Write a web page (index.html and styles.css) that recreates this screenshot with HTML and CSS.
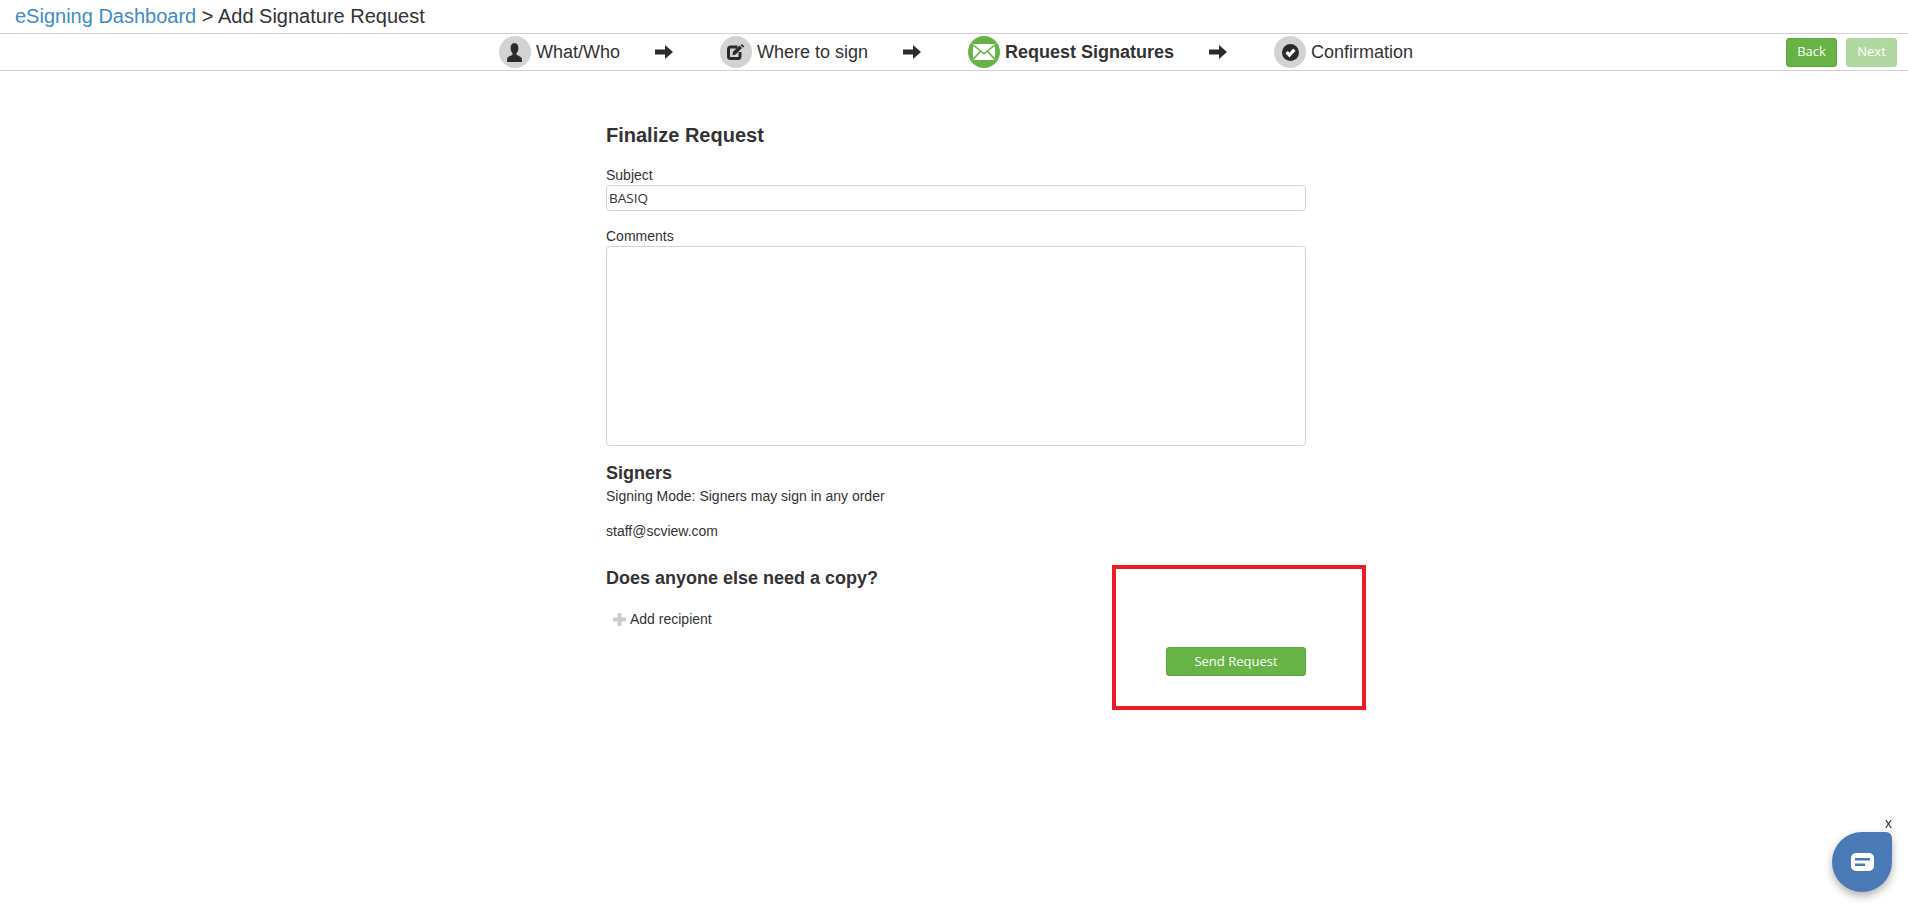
FILE: index.html
```html
<!DOCTYPE html>
<html lang="en">
<head>
<meta charset="utf-8">
<title>Add Signature Request</title>
<link rel="stylesheet" href="styles.css">
</head>
<body>
<header class="topbar">
  <a class="crumb-link" href="#">eSigning Dashboard</a> &gt; Add Signature Request
</header>
<nav class="stepbar">
  <ol class="steps">
    <li class="step">
      <span class="disc"><svg class="ico ico-user" viewBox="0 0 15 19"><path fill="#2b2b2b" d="M7.500 0C5 0 3.600 2 3.600 5c0 2.200.7 4.100 1.900 5.300v1.500C3.200 13 .7 13.800.3 15.300.1 16.300 0 17.700 0 19h15c0-1.300-.1-2.700-.3-3.700-.4-1.500-2.900-2.300-5.200-3.500v-1.500c1.200-1.200 1.900-3.100 1.900-5.300 0-3-1.400-5-3.900-5z"/></svg></span>
      <span class="step-name">What/Who</span>
    </li>
    <li class="arrow"><svg class="arrow-ico" viewBox="0 0 18 14"><path fill="#2b2b2b" d="M0 4.500h10V0l8 7-8 7V9.500H0z"/></svg></li>
    <li class="step">
      <span class="disc"><svg class="ico ico-edit" viewBox="0 0 18 16"><path fill="none" stroke="#2b2b2b" stroke-width="3" stroke-linejoin="round" d="M10.500 3H3.500a2 2 0 0 0-2 2v7.500a2 2 0 0 0 2 2H11a2 2 0 0 0 2-2V8"/><path fill="#2b2b2b" d="M6 7.700 12.500 1.500l2.500 2.500-6.300 6.500-3.200.7z"/><path fill="#2b2b2b" d="M15 0l2.500 2.500-1.500 1-2.300-2.300z"/></svg></span>
      <span class="step-name">Where to sign</span>
    </li>
    <li class="arrow"><svg class="arrow-ico" viewBox="0 0 18 14"><path fill="#2b2b2b" d="M0 4.500h10V0l8 7-8 7V9.500H0z"/></svg></li>
    <li class="step step-current">
      <span class="disc disc-current"><svg class="ico ico-mail" viewBox="0 0 22 16"><rect width="22" height="16" fill="#fff"/><path fill="none" stroke="#67b346" stroke-width="1.600" d="M0 .8l11 9 11-9M0 15.500l7.500-8.200M22 15.500l-7.500-8.200"/></svg></span>
      <span class="step-name">Request Signatures</span>
    </li>
    <li class="arrow"><svg class="arrow-ico" viewBox="0 0 18 14"><path fill="#2b2b2b" d="M0 4.500h10V0l8 7-8 7V9.500H0z"/></svg></li>
    <li class="step">
      <span class="disc"><svg class="ico ico-check" viewBox="0 0 24 24"><circle cx="12" cy="12" r="12" fill="#2b2b2b"/><path fill="none" stroke="#fff" stroke-width="4.500" d="M6.500 11.500l4 4.200 7-7.700"/></svg></span>
      <span class="step-name">Confirmation</span>
    </li>
  </ol>
  <div class="nav-actions">
    <button class="btn" type="button">Back</button>
    <button class="btn btn-off" type="button">Next</button>
  </div>
</nav>
<main class="page">
  <form class="request">
    <h2 class="title">Finalize Request</h2>
    <label class="field-label" for="subject">Subject</label>
    <input class="field" id="subject" type="text" value="BASIQ">
    <label class="field-label field-label-next" for="comments">Comments</label>
    <textarea class="field field-area" id="comments"></textarea>
    <h3 class="heading signers">Signers</h3>
    <p class="mode">Signing Mode: Signers may sign in any order</p>
    <p class="signer">staff@scview.com</p>
    <h3 class="heading copy">Does anyone else need a copy?</h3>
    <div class="add"><svg class="plus" viewBox="0 0 13 13"><path fill="#ccc" d="M4.500 0h4v4.500H13v4H8.500V13h-4V8.500H0v-4h4.500z"/></svg><span>Add recipient</span></div>
    <div class="send-row"><button class="btn btn-send" type="button">Send Request</button></div>
  </form>
</main>
<div class="callout"></div>
<div class="chat">
  <span class="chat-close">x</span>
  <div class="chat-bubble"><svg class="chat-ico" viewBox="0 0 23 18"><rect width="23" height="18" rx="5" fill="#fff"/><rect x="4" y="5" width="15" height="2.500" fill="#4a7ab5"/><rect x="4" y="10.500" width="10" height="2.500" fill="#4a7ab5"/></svg></div>
</div>
</body>
</html>
```
FILE: styles.css
```css
* { box-sizing: border-box; }
html, body { margin: 0; padding: 0; background: #fff; }
body {
  font-family: "Liberation Sans", Arial, sans-serif;
  font-size: 14px;
  line-height: 20px;
  color: #333;
  height: 909px;
  overflow: hidden;
}
.topbar {
  height: 34px;
  padding: 5px 0 0 15px;
  font-size: 20px;
  line-height: 22px;
  border-bottom: 1px solid #d0d0d0;
}
.crumb-link { color: #428bca; text-decoration: none; }
.stepbar {
  height: 37px;
  display: grid;
  grid-template-columns: 1fr auto 1fr;
  align-items: center;
  border-bottom: 1px solid #d0d0d0;
  position: relative;
}
.steps {
  grid-column: 2;
  list-style: none;
  margin: 0;
  padding: 0 0 0 4px;
  display: flex;
  align-items: center;
  height: 36px;
}
.step { display: flex; align-items: center; gap: 5px; }
.step-name { font-size: 18px; line-height: 22px; white-space: nowrap; }
.step-current .step-name { font-weight: 700; }
.disc {
  width: 32px;
  height: 32px;
  border-radius: 50%;
  background: #d3d3d3;
  display: flex;
  align-items: center;
  justify-content: center;
  flex: none;
}
.disc-current { background: #67b346; }
.ico { display: block; }
.ico-user { width: 15px; height: 19px; }
.ico-edit { width: 18px; height: 16px; }
.ico-mail { width: 22px; height: 16px; }
.ico-check { width: 17px; height: 17px; }
.arrow { padding: 0 47px 0 35px; display: flex; align-items: center; }
.arrow-ico { width: 18px; height: 14px; display: block; }
.nav-actions {
  grid-column: 3;
  justify-self: end;
  display: flex;
  gap: 9px;
  padding-right: 11px;
}
.btn {
  font-family: "Open Sans", sans-serif;
  font-size: 13px;
  line-height: 18px;
  color: #fff;
  width: 51px;
  height: 29px;
  padding: 0 0 2px;
  background: #67b346;
  border: 1px solid #5ca53e;
  border-radius: 3px;
}
.btn-off { opacity: .5; }
.page { display: flex; justify-content: center; padding-left: 4px; }
.request { width: 700px; padding-top: 53px; }
.title { margin: 0 0 19px; font-size: 20px; line-height: 22px; font-weight: 700; }
.field-label { display: block; font-size: 14px; line-height: 20px; font-weight: 400; }
.field-label-next { margin-top: 15px; }
.field {
  display: block;
  width: 100%;
  height: 26px;
  padding: 0 2px;
  font-family: "Open Sans", sans-serif;
  font-size: 13.5px;
  color: #333;
  background: #fff;
  border: 1px solid #d4d4d4;
  border-radius: 4px;
  resize: none;
  outline: none;
}
.field-area { height: 200px; }
.heading { margin: 0; font-size: 18px; line-height: 20px; font-weight: 700; }
.signers { margin-top: 17px; }
.mode { margin: 3px 0 0; }
.signer { margin: 15px 0 0; }
.copy { margin-top: 27px; }
.add { margin-top: 21px; padding-left: 7px; display: flex; align-items: center; gap: 4px; }
.plus { width: 13px; height: 13px; display: block; }
.send-row { display: flex; justify-content: flex-end; margin-top: 18px; }
.btn-send { width: 140px; height: 29px; font-size: 13px; }
.callout {
  position: absolute;
  left: 1112px;
  top: 565px;
  width: 254px;
  height: 145px;
  border: 4px solid #ed1c24;
  pointer-events: none;
}
.chat { position: fixed; left: 1832px; top: 815px; width: 60px; }
.chat-close {
  display: block;
  text-align: right;
  font-size: 14px;
  line-height: 17px;
}
.chat-bubble {
  width: 60px;
  height: 60px;
  background: #4a7ab5;
  border-radius: 50% 6px 50% 50%;
  box-shadow: 0 4px 8px rgba(0, 0, 0, .3);
  display: flex;
  align-items: center;
  justify-content: center;
}
.chat-ico { width: 23px; height: 18px; display: block; }
```
